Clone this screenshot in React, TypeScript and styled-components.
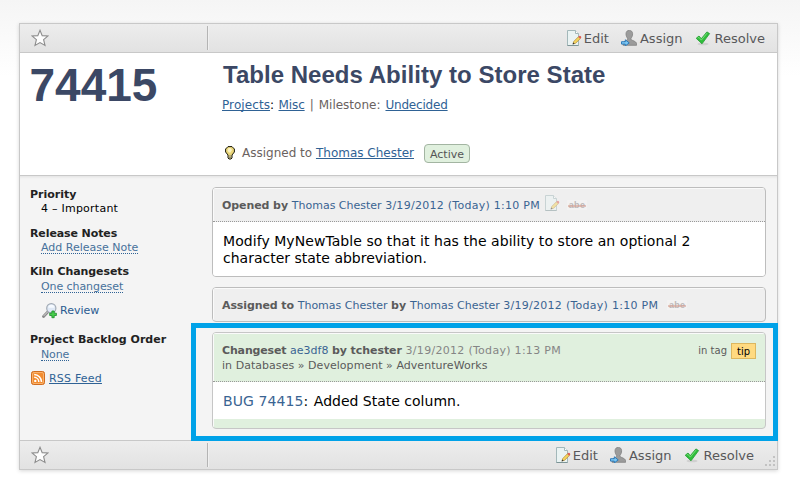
import React from 'react';
import styled, { createGlobalStyle, css } from 'styled-components';

const GlobalStyle = createGlobalStyle`
  *, *::before, *::after { box-sizing: border-box; }
  body {
    margin: 0;
    height: 482px;
    overflow: hidden;
    background: linear-gradient(#f5f5f5 0, #fff 76px) #fff no-repeat;
    color: #000;
    font-family: "DejaVu Sans", Verdana, sans-serif;
  }
`;

const Page = styled.div`
  padding: 23px 0 0 19px;
`;

const Card = styled.main`
  position: relative;
  width: 759px;
  height: 447px;
  border: 1px solid #c8c8c8;
  background: #f4f4f4;
  box-shadow: 0 1px 4px rgba(0, 0, 0, 0.16);
`;

/* Toolbars */
const Toolbar = styled.div<{ $edge: 'top' | 'bottom' }>`
  position: relative;
  display: flex;
  align-items: center;
  height: 29px;
  background: linear-gradient(#ededed, #e2e2e2);
  ${p => p.$edge === 'top'
    ? css`border-bottom: 1px solid #c8c8c8; padding-right: 12px;`
    : css`border-top: 1px solid #c8c8c8; padding-right: 23px;`}
`;

const StarCell = styled.div`
  width: 188px;
  height: 24px;
  padding: 3px 0 0 11px;
  border-right: 1px solid #b4b4b4;
  box-shadow: 1px 0 #f0f0f0;
`;

const Actions = styled.div`
  display: flex;
  gap: 12px;
  margin-left: auto;
`;

const Action = styled.a<{ $gap: number }>`
  display: flex;
  align-items: center;
  gap: ${p => p.$gap}px;
  height: 28px;
`;

const ActionText = styled.span`
  padding-top: 2px;
  color: #58585a;
  font-size: 13px;
  line-height: 28px;
  white-space: nowrap;
`;

const Icon = styled.svg<{ $faded?: boolean }>`
  display: block;
  flex: none;
  opacity: ${p => (p.$faded ? 0.5 : 1)};
`;

const Grip = styled.svg`
  position: absolute;
  right: 1px;
  bottom: 2px;
`;

/* Case header */
const Header = styled.header`
  display: grid;
  grid-template-columns: 202px 1fr;
  height: 123px;
  border-bottom: 1px solid #c8c8c8;
  background: #fff;
`;

const CaseNumber = styled.div`
  padding: 9px 0 0 9.5px;
  color: #3b4865;
  font: bold 46px/46px "Liberation Sans", Arial, sans-serif;
`;

const HeaderMain = styled.div`
  padding-top: 10px;
`;

const Title = styled.h1`
  margin: 0 0 0 1px;
  color: #3b4865;
  font: bold 24px/24px "Liberation Sans", Arial, sans-serif;
  letter-spacing: 0.03px;
  white-space: nowrap;
`;

const Breadcrumb = styled.div`
  margin-top: 10px;
  color: #6a6260;
  font-size: 12px;
  line-height: 16px;
  white-space: pre;
`;

const Assignee = styled.div`
  display: flex;
  margin: 30px 0 0 2px;
  color: #6a6260;
  font-size: 12px;
  line-height: 20px;
  white-space: pre;
`;

const BulbSlot = styled.span`
  width: 18px;
  padding-top: 3px;
`;

const Status = styled.span`
  width: 46px;
  height: 19px;
  margin: 1px 0 0 10px;
  border: 1px solid #a3b5a2;
  border-radius: 4px;
  background: #e0f0de;
  color: #555;
  font-size: 11px;
  line-height: 19px;
  text-align: center;
`;

/* Text runs */
const Run = styled.span<{ $track?: number }>`
  letter-spacing: ${p => p.$track ?? 0}px;
`;

const Black = styled.span`
  color: #000;
  word-spacing: 0.6px;
`;

const Milestone = styled.span`
  word-spacing: 1.2px;
`;

const Link = styled.a<{ $track?: number }>`
  color: #2f6295;
  letter-spacing: ${p => p.$track ?? 0}px;
  text-decoration: underline 1px;
  text-underline-offset: 1px;
  text-decoration-skip-ink: none;
`;

const Name = styled.span<{ $track?: number }>`
  color: #3a6492;
  letter-spacing: ${p => p.$track ?? 0}px;
`;

const Strong = styled.b<{ $track?: number }>`
  letter-spacing: ${p => p.$track ?? 0}px;
`;

/* Body */
const Body = styled.div`
  display: grid;
  grid-template-columns: 192px 554px;
  height: 264px;
  padding-top: 11px;
  box-shadow: inset 0 3px 3px -2px rgba(0, 0, 0, 0.08);
`;

const Sidebar = styled.aside`
  padding-left: 10px;
  font-size: 11px;
  line-height: 16px;
  white-space: nowrap;
`;

const Field = styled.section<{ $gap: number }>`
  margin-top: ${p => p.$gap}px;
`;

const Label = styled.div<{ $track?: number }>`
  height: 14px;
  color: #222;
  font-weight: bold;
  letter-spacing: ${p => p.$track ?? 0}px;
`;

const Value = styled.div<{ $height?: number }>`
  display: flex;
  align-items: flex-end;
  height: ${p => p.$height ?? 14}px;
  padding-left: 11px;
`;

const PlainValue = styled.span`
  height: 14px;
  letter-spacing: 0.24px;
`;

const Dotted = styled.a<{ $track?: number }>`
  height: 14px;
  border-bottom: 1px dotted #2f6295;
  color: #47719b;
  letter-spacing: ${p => p.$track ?? 0}px;
`;

const IconLine = styled.div<{ $top: number; $indent: number; $gap: number }>`
  display: flex;
  align-items: flex-start;
  gap: ${p => p.$gap}px;
  height: 14px;
  margin: ${p => p.$top}px 0 0 ${p => p.$indent}px;
  color: #2a5a90;
`;

/* Events */
const Events = styled.div`
  display: flex;
  flex-direction: column;
  gap: 10px;
`;

const Event = styled.article<{ $tone?: 'green' }>`
  flex: none;
  border: 1px solid ${p => (p.$tone ? '#c6c6c6' : '#bdbdbd')};
  border-radius: 4px;
  background: ${p => (p.$tone ? '#e0f0de' : '#efefef')};
  overflow: hidden;
`;

const EventHead = styled.div<{ $height: number; $dotted?: boolean }>`
  display: flex;
  height: ${p => p.$height}px;
  padding: 10px 9px 0 9px;
  border-bottom: ${p => (p.$dotted ? '1px dotted #999' : '0')};
  box-shadow: inset 1px 1px #fafafa;
  color: #5b5b5b;
  font-size: 11px;
  line-height: 16px;
  white-space: pre;
`;

const HeadLines = styled.div`
  line-height: 15px;
`;

const Stamp = styled.span`
  color: #858585;
  letter-spacing: 0.29px;
`;

const EventBody = styled.div`
  padding: 11px 9px 9px 10px;
  background: #fff;
  font-size: 14px;
  line-height: 17px;
  white-space: pre;
`;

const EventFoot = styled.div`
  height: 9px;
  box-shadow: inset 1px 0 #fafafa;
`;

const HeadIcons = styled.span`
  display: flex;
  margin-left: 4px;
  margin-top: -3px;
`;

const Struck = styled.span<{ $left: number }>`
  position: relative;
  width: 20px;
  height: 10px;
  margin: 5px 0 0 ${p => p.$left}px;
  background: #f3f2f2;
  color: #bcb8b8;
  font: bold 9px/11px "Liberation Sans", Arial, sans-serif;
  text-align: center;
  letter-spacing: 0.3px;

  &::after {
    content: '';
    position: absolute;
    left: 1px;
    right: 1px;
    top: 5px;
    height: 2px;
    background: rgba(214, 160, 148, 0.6);
  }
`;

const TagGroup = styled.div`
  display: flex;
  gap: 4px;
  margin-left: auto;
  font-size: 10px;
  line-height: 16px;
`;

const Tag = styled.span`
  width: 25px;
  height: 16px;
  border: 1px solid #dcb75f;
  background: #ffda80;
  color: #000;
  text-align: center;
`;

/* Marks the changeset event; lies over the card. */
const Highlight = styled.div`
  position: absolute;
  left: 171px;
  top: 299px;
  width: 587px;
  height: 118px;
  border: 5px solid #00a2e8;
  pointer-events: none;
`;

const StarIcon = () => (
  <Icon width="18" height="18" viewBox="0 0 18 18">
    <path d="M9 1.300l2.200 5.300 5.900.3-4.500 3.800 1.400 5.700L9 13.600l-5 2.800 1.400-5.700L.9 6.900l5.900-.3z" fill="#fdfdfd" stroke="#8c8c8c" strokeWidth="1.100" />
  </Icon>
);

const EditIcon = ({ faded }: { faded?: boolean }) => (
  <Icon $faded={faded} width="16" height="16" viewBox="0 0 16 16">
    <path d="M1.500.5h8l3 3v12h-11z" fill="#eaf3f3" stroke="#a3b8ba" />
    <path d="M1.500 15.500h11" stroke="#7d9496" fill="none" />
    <path d="M9.500.5v3h3" fill="#fff" stroke="#a3b8ba" />
    <path d="M7 14l.8-2.600 4.700-4.700 1.900 1.800L9.700 13.200z" fill="#f4d45c" stroke="#b08a3a" strokeWidth=".7" />
    <path d="M12.300 7l1-1q.8-.4 1.500.3t.4 1.500l-1 1z" fill="#de5a52" />
    <path d="M6.500 14.600l.8-2.100 1.400 1.300z" fill="#333" />
  </Icon>
);

const AssignIcon = () => (
  <Icon width="16" height="16" viewBox="0 0 16 16">
    <path d="M5 3.700C5 1.600 6.300.4 8.300.4s3.300 1.200 3.300 3.300c0 1.900-.6 3.500-1.600 4.500v1.300c1.200 1.200 4.700 1.500 5.600 3.800v2H2v-2C3 11 5.500 10.700 6.600 9.500V8.200C5.600 7.200 5 5.600 5 3.700z" fill="#9b9b9b" stroke="#808080" strokeWidth=".8" />
    <path d="M.5 11.700h3.800V9.800l3.900 3.100-3.900 3v-1.800H.5z" fill="#7cc8f4" stroke="#2474b8" strokeWidth=".9" />
  </Icon>
);

const CheckIcon = () => (
  <Icon width="16" height="16" viewBox="0 0 16 16">
    <ellipse cx="8" cy="14" rx="5.500" ry="1.300" fill="#d0d0d0" />
    <path d="M1.200 8.300L4 6l2.300 2.700L11.900 1.900l2.700 1.700L7 13.800z" fill="#2fbe3b" stroke="#209c2f" strokeWidth=".8" />
    <path d="M2.800 8.200l1.100-.9 2.400 2.800L12 3.200" stroke="#7fe07f" fill="none" strokeWidth=".9" />
  </Icon>
);

const BulbIcon = () => (
  <Icon width="12" height="14" viewBox="0 0 12 14">
    <path d="M4 .6h4L10.400 3v3L8 9v3l-1 1H5l-1-1V9L1.600 6V3z" fill="#ead678" stroke="#17170c" strokeWidth="1" />
    <path d="M4.500 2h2L8 4 6.500 6.500H5L3.500 4.500z" fill="#fbf3c4" />
    <path d="M4.500 10h3M4.500 11.500h3" stroke="#777" strokeWidth=".8" />
  </Icon>
);

const ReviewIcon = () => (
  <Icon width="16" height="16" viewBox="0 0 16 16">
    <path d="M1.500 13.500L6 8.800" stroke="#8a8a8a" strokeWidth="2.800" strokeLinecap="round" />
    <path d="M1.700 12.900L5.500 9" stroke="#dadada" strokeWidth="1" />
    <circle cx="9.300" cy="5.200" r="4.600" fill="#dfe9f6" stroke="#a3abb5" strokeWidth="1.200" />
    <path d="M6.300 4.800a3 3 0 0 1 6 0z" fill="#f6faff" />
    <path d="M9.900 8h2.300v2.200h2.200v2.300h-2.200v2.200H9.900v-2.200H7.700v-2.300h2.200z" fill="#48cf4c" stroke="#188a26" strokeWidth=".8" />
  </Icon>
);

const RssIcon = () => (
  <Icon width="14" height="14" viewBox="0 0 14 14">
    <rect x=".5" y=".5" width="13" height="13" rx="2" fill="#f28c30" stroke="#d06c20" />
    <rect x="1.500" y="1.500" width="11" height="11" rx="1.500" fill="none" stroke="#f9b26c" />
    <circle cx="4.300" cy="9.900" r="1.200" fill="#fff" />
    <path d="M3.200 6.300a4.700 4.700 0 0 1 4.600 4.700M3.200 3.600A7.400 7.400 0 0 1 10.500 11" fill="none" stroke="#fff" strokeWidth="1.500" />
  </Icon>
);

const CaseActions = () => (
  <Actions>
    <Action $gap={2}><EditIcon /><ActionText>Edit</ActionText></Action>
    <Action $gap={3}><AssignIcon /><ActionText>Assign</ActionText></Action>
    <Action $gap={4}><CheckIcon /><ActionText>Resolve</ActionText></Action>
  </Actions>
);

export default function App() {
  return (
    <Page>
      <GlobalStyle />
      <Card>
        <Toolbar $edge="top">
          <StarCell><StarIcon /></StarCell>
          <CaseActions />
        </Toolbar>

        <Header>
          <CaseNumber>74415</CaseNumber>
          <HeaderMain>
            <Title>Table Needs Ability to Store State</Title>
            <Breadcrumb>
              <Link $track={0.09}>Projects</Link><Black>: </Black>
              <Link $track={-0.1}>Misc</Link><Milestone>{' | Milestone: '}</Milestone>
              <Link $track={-0.2}>Undecided</Link>
            </Breadcrumb>
            <Assignee>
              <BulbSlot><BulbIcon /></BulbSlot>
              <span>Assigned to <Link>Thomas Chester</Link></span>
              <Status>Active</Status>
            </Assignee>
          </HeaderMain>
        </Header>

        <Body>
          <Sidebar>
            <Field $gap={0}>
              <Label>Priority</Label>
              <Value><PlainValue>4 – Important</PlainValue></Value>
            </Field>
            <Field $gap={11}>
              <Label $track={-0.1}>Release Notes</Label>
              <Value><Dotted>Add Release Note</Dotted></Value>
            </Field>
            <Field $gap={10}>
              <Label $track={-0.07}>Kiln Changesets</Label>
              <Value $height={15}><Dotted $track={-0.08}>One changeset</Dotted></Value>
            </Field>
            <IconLine $top={10} $indent={12} $gap={2}><ReviewIcon />Review</IconLine>
            <Field $gap={15}>
              <Label>Project Backlog Order</Label>
              <Value $height={15}><Dotted $track={-0.15}>None</Dotted></Value>
            </Field>
            <IconLine $top={10} $indent={1} $gap={4}><RssIcon /><Link $track={0.2}>RSS Feed</Link></IconLine>
          </Sidebar>

          <Events>
            <Event>
              <EventHead $height={34} $dotted>
                <Strong $track={-0.08}>Opened by </Strong>
                <Name>Thomas Chester </Name>
                <Name $track={0.27}>3/19/2012 (Today) 1:10 PM</Name>
                <HeadIcons><EditIcon faded /><Struck $left={7}>abe</Struck></HeadIcons>
              </EventHead>
              <EventBody>
                <Run $track={0.055}>Modify MyNewTable so that it has the ability to store an optional 2</Run>
                {'\ncharacter state abbreviation.'}
              </EventBody>
            </Event>

            <Event>
              <EventHead $height={33}>
                <Strong $track={-0.1}>Assigned to </Strong>
                <Name>Thomas Chester </Name>
                <Strong>by </Strong>
                <Name>Thomas Chester </Name>
                <Name $track={0.27}>3/19/2012 (Today) 1:10 PM</Name>
                <HeadIcons><Struck $left={5}>abe</Struck></HeadIcons>
              </EventHead>
            </Event>

            <Event $tone="green">
              <EventHead $height={49} $dotted>
                <HeadLines>
                  <Strong $track={-0.15}>Changeset </Strong>
                  <Name>ae3df8 </Name>
                  <Strong $track={-0.07}>by tchester </Strong>
                  <Stamp>3/19/2012 (Today) 1:13 PM</Stamp>
                  <br />
                  <Run $track={0.04}>in Databases » Development » AdventureWorks</Run>
                </HeadLines>
                <TagGroup>in tag<Tag>tip</Tag></TagGroup>
              </EventHead>
              <EventBody>
                <Name $track={0.08}>BUG 74415</Name><Run $track={0.6}>: </Run>Added State column.
              </EventBody>
              <EventFoot />
            </Event>
          </Events>
        </Body>

        <Toolbar $edge="bottom">
          <StarCell><StarIcon /></StarCell>
          <CaseActions />
          <Grip width="11" height="11" viewBox="0 0 11 11" fill="#c2c2c2">
            <path d="M8 0h2v2H8zM8 4h2v2H8zM4 4h2v2H4zM8 8h2v2H8zM4 8h2v2H4zM0 8h2v2H0z" />
          </Grip>
        </Toolbar>
        <Highlight />
      </Card>
    </Page>
  );
}
